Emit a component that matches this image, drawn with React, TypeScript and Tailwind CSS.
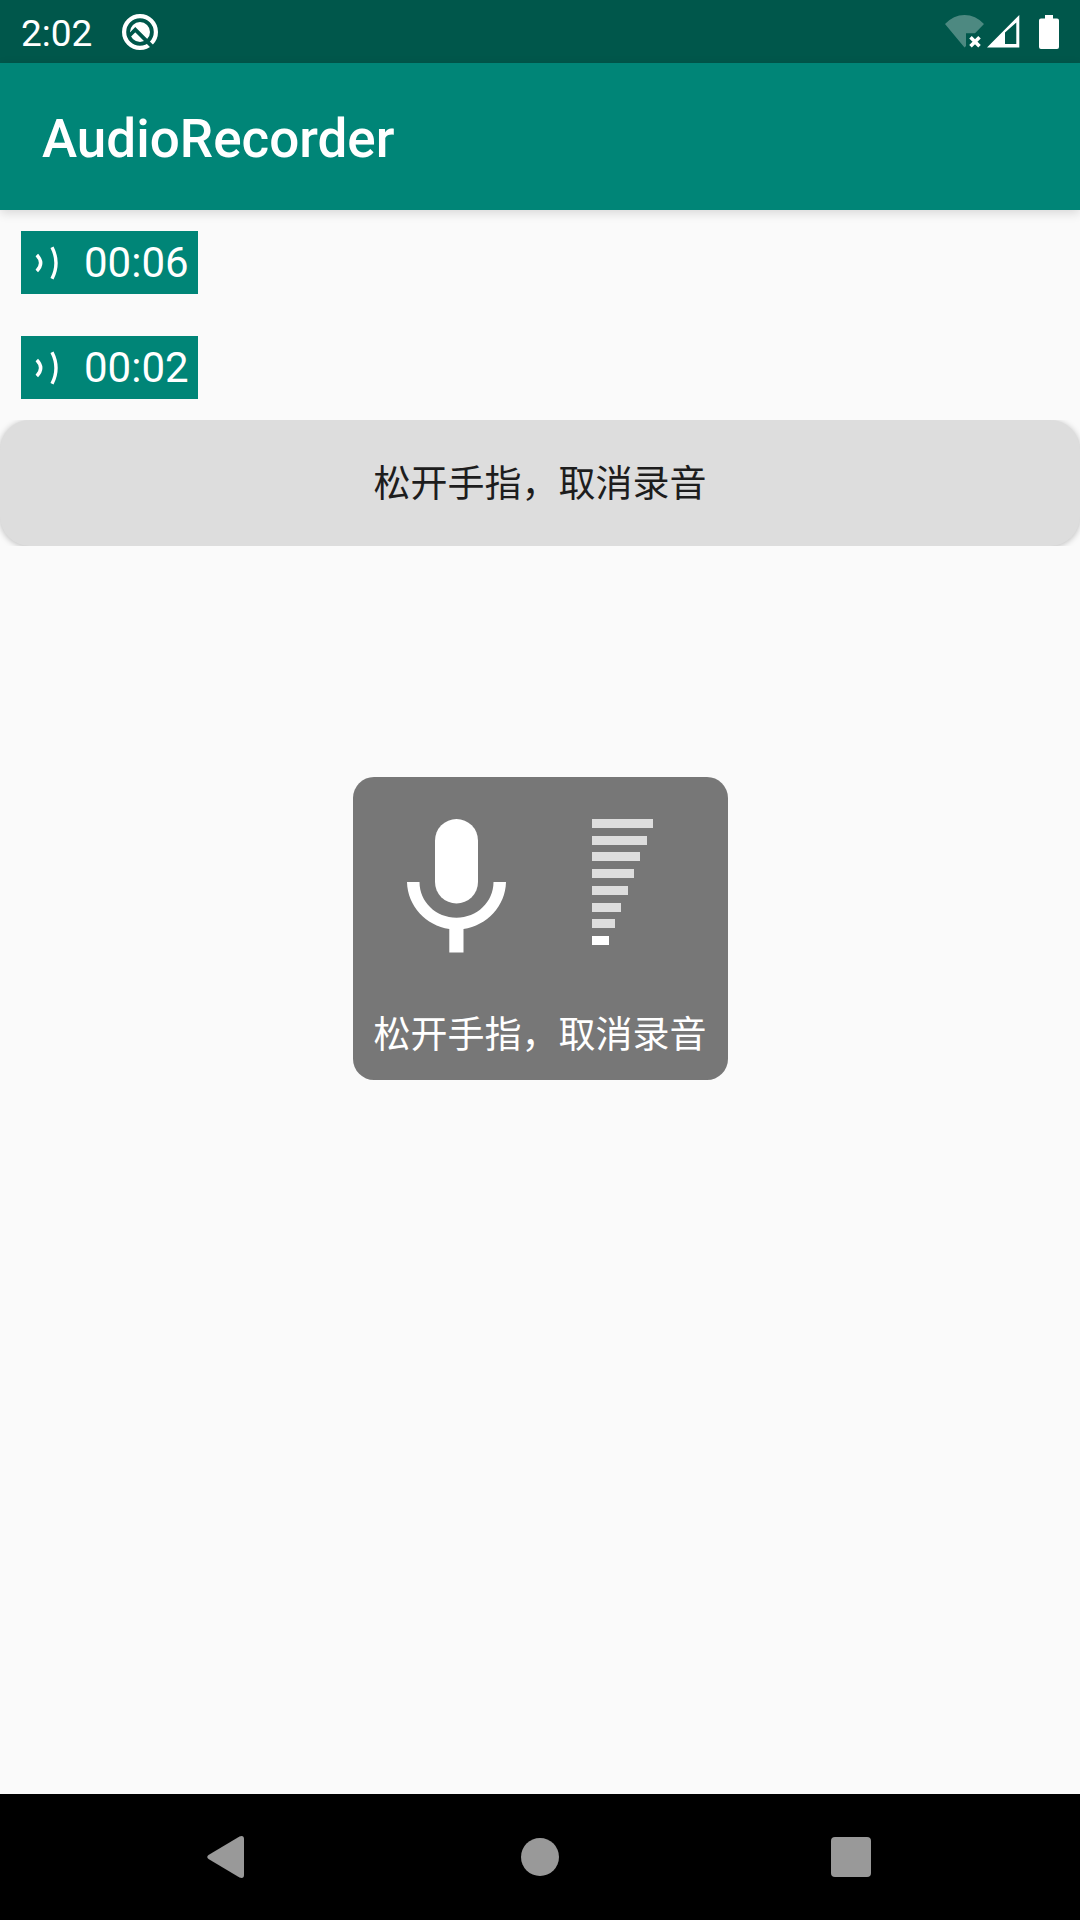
const recordings = [
  { id: 1, duration: "00:06" },
  { id: 2, duration: "00:02" },
];

const levelWidths = [61, 55, 48, 42, 36, 29, 23, 17];
const activeLevels = 1;

function DebugIcon() {
  return (
    <svg viewBox="0 0 38 38" className="size-[38px]" aria-hidden="true">
      <circle cx="19" cy="19" r="15.900" fill="none" stroke="#fff" strokeWidth="4.200" />
      <circle cx="19" cy="19" r="10" fill="#fff" />
      <path d="M7.500 23.500L14.300 16.700L33 35.400" fill="none" stroke="#00574b" strokeWidth="3.800" />
    </svg>
  );
}

function WifiOffIcon() {
  return (
    <svg viewBox="0 0 40 34" className="h-[34px] w-10" aria-hidden="true">
      <path d="M0 9Q8.500 0 19.500 0T39 9L30 18.300H21V31L19.500 32.500Z" fill="#fff" fillOpacity="0.3" />
      <path d="M25.500 22.300L34.500 31.300M34.500 22.300L25.500 31.300" stroke="#fff" strokeWidth="3.600" />
    </svg>
  );
}

function SignalIcon() {
  return (
    <svg viewBox="0 0 33 33" className="size-[33px]" aria-hidden="true">
      <path
        d="M0 32.500L32.300 0V32.500ZM18 17.500V29H29.300V7.600Z"
        fill="#fff"
        fillRule="evenodd"
      />
    </svg>
  );
}

function BatteryIcon() {
  return (
    <svg viewBox="0 0 20 34" className="h-[34px] w-5" aria-hidden="true">
      <path
        d="M6 0H14V3.500H18Q20 3.500 20 5.500V32Q20 34 18 34H2Q0 34 0 32V5.500Q0 3.500 2 3.500H6Z"
        fill="#fff"
      />
    </svg>
  );
}

function SoundWaveIcon() {
  return (
    <svg viewBox="0 0 23 34" className="h-[34px] w-[23px]" aria-hidden="true">
      <path
        d="M1.800 9Q9.500 17 1.800 25M17 1.200Q25 17 17 32.800"
        fill="none"
        stroke="#fff"
        strokeWidth="3.400"
      />
    </svg>
  );
}

function MicIcon() {
  return (
    <svg viewBox="0 0 99 134" className="h-[134px] w-[99px]" aria-hidden="true">
      <rect x="28" y="0" width="43" height="84.500" rx="21.500" fill="#fff" />
      <path
        d="M0 63H12.500C12.500 83 29 98.700 49.500 98.700S86.500 83 86.500 63H99C98.500 87 80 106.500 56.500 110V133.500H42.300V110C19 106.500 0.500 87 0 63Z"
        fill="#fff"
      />
    </svg>
  );
}

function LevelMeter() {
  return (
    <div className="flex h-[126px] w-[62px] flex-col justify-between" role="img" aria-label="音量">
      {levelWidths.map((width, index) => (
        <span
          key={width}
          className={
            index >= levelWidths.length - activeLevels
              ? "block h-[9px] bg-white"
              : "block h-[9px] bg-[#dddddd]"
          }
          style={{ width }}
        />
      ))}
    </div>
  );
}

export default function App() {
  return (
    <div className="flex min-h-screen flex-col bg-[#fafafa] font-['Roboto','Noto_Sans_CJK_SC',sans-serif] text-white">
      <div className="flex h-[63px] shrink-0 items-center justify-between bg-[#00574b] px-[21px]">
        <div className="flex items-center gap-[29px]">
          <time className="pt-1 text-[37px] leading-[43px]">2:02</time>
          <DebugIcon />
        </div>
        <div className="flex items-center">
          <WifiOffIcon />
          <span className="ml-0.5 flex">
            <SignalIcon />
          </span>
          <span className="ml-[19px] flex">
            <BatteryIcon />
          </span>
        </div>
      </div>

      <div className="relative flex flex-1 flex-col">
        <header className="flex h-[147px] shrink-0 items-center bg-[#008577] px-[42px] shadow-[0_3px_10px_rgba(0,0,0,0.14)]">
          <h1 className="pt-1 text-[53px] leading-[62px] font-medium">AudioRecorder</h1>
        </header>

        <main>
          <ul className="flex flex-col items-start gap-[42px] p-[21px]">
            {recordings.map((recording) => (
              <li key={recording.id}>
                <button
                  type="button"
                  className="flex h-[63px] items-center gap-[26px] bg-[#008577] pr-[9px] pl-[14px] text-[42px] leading-[49px]"
                >
                  <SoundWaveIcon />
                  <span>{recording.duration}</span>
                </button>
              </li>
            ))}
          </ul>
          <div className="overflow-hidden">
            <button
              type="button"
              className="flex h-[126px] w-full items-center justify-center rounded-[30px] bg-[#dddddd] pt-1 text-[37px] leading-[54px] text-[#1d1d1d] shadow-[0_1px_6px_rgba(0,0,0,0.25)]"
            >
              松开手指，取消录音
            </button>
          </div>
        </main>

        <div className="pointer-events-none absolute inset-0 flex items-center justify-center">
          <div
            role="dialog"
            aria-label="录音"
            className="flex flex-col rounded-[21px] bg-[#777777] px-[21px] pt-[42px] pb-[17px]"
          >
            <div className="grid h-[190px] grid-cols-2 items-start justify-items-center">
              <MicIcon />
              <LevelMeter />
            </div>
            <p className="text-[37px] leading-[54px]">松开手指，取消录音</p>
          </div>
        </div>
      </div>

      <nav className="grid h-[126px] shrink-0 grid-cols-3 bg-black px-[73px]">
        <button type="button" aria-label="Back" className="flex items-center justify-center">
          <svg viewBox="0 0 44 42" className="h-[42px] w-11" aria-hidden="true">
            <path d="M1.500 19L32.500 0.500Q37 -1 37 3V39Q37 43 32.500 41.500L1.500 23Q-1 21 1.500 19Z" fill="#999" />
          </svg>
        </button>
        <button type="button" aria-label="Home" className="flex items-center justify-center">
          <span className="size-[38px] rounded-full bg-[#999999]" />
        </button>
        <button type="button" aria-label="Overview" className="flex items-center justify-center">
          <span className="size-10 rounded bg-[#999999]" />
        </button>
      </nav>
    </div>
  );
}
